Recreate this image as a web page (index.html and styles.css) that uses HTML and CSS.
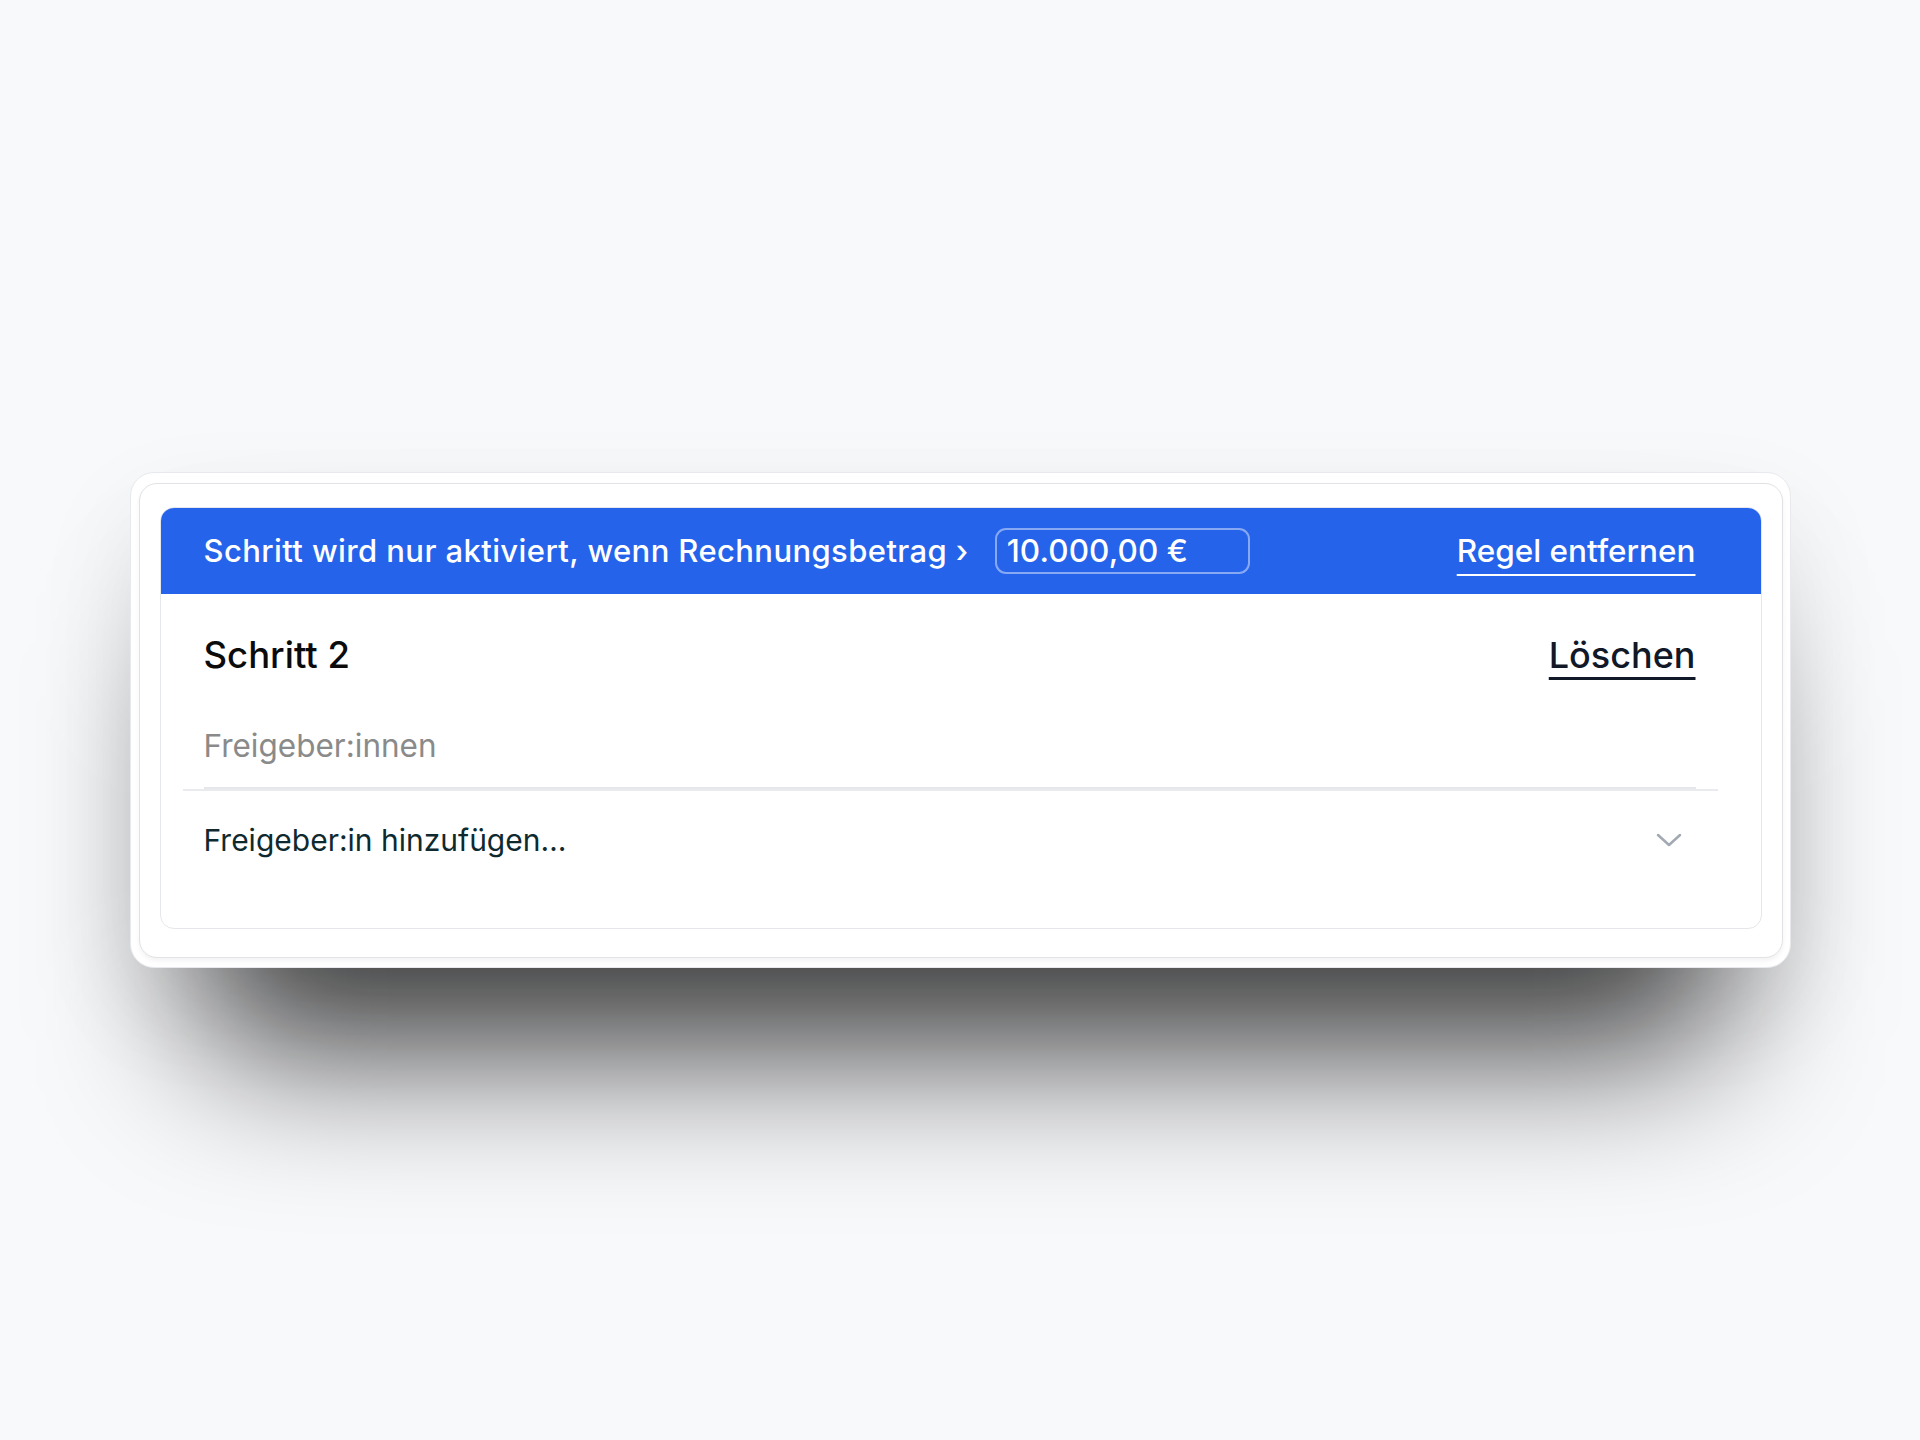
FILE: index.html
```html
<!DOCTYPE html>
<html lang="de">
<head>
<meta charset="utf-8">
<title>Schritt 2</title>
<link rel="stylesheet" href="styles.css">
</head>
<body>
<main class="stage">
  <div class="frame">
    <div class="panel">
      <section class="step">
        <header class="rule">
          <span class="rule-text">Schritt wird nur aktiviert, wenn Rechnungsbetrag ›</span>
          <div class="amount">10.000,00 €</div>
          <a class="rule-remove">Regel entfernen</a>
        </header>
        <div class="step-body">
          <div class="step-head">
            <h2 class="step-title">Schritt 2</h2>
            <a class="step-delete">Löschen</a>
          </div>
          <div class="approvers-label">Freigeber:innen</div>
          <div class="select">
            <span class="select-text">Freigeber:in hinzufügen…</span>
            <svg class="chevron" width="26" height="14" viewBox="0 0 26 14" aria-hidden="true">
              <path d="M2 2 L13 12 L24 2" fill="none" stroke="#a3a9b3" stroke-width="2.5" stroke-linecap="round" stroke-linejoin="round"/>
            </svg>
          </div>
        </div>
      </section>
    </div>
  </div>
</main>
</body>
</html>
```

FILE: styles.css
```css
* { box-sizing: border-box; }

html, body {
  margin: 0;
  padding: 0;
}

body {
  background: #f8f9fb;
  font-family: "Inter", "Noto Sans", "Liberation Sans", sans-serif;
  color: #111;
}

.stage {
  min-height: 1440px;
  display: flex;
  align-items: center;
  justify-content: center;
}

.frame {
  position: relative;
  width: 1661px;
  background: #ffffff;
  border: 1px solid #e8e9ec;
  border-radius: 24px;
  padding: 10px 7px 9px 8px;
  box-shadow: 0 40px 100px rgba(0, 0, 0, 0.08);
}

/* soft drop shadow cast below the card */
.frame::before {
  content: "";
  position: absolute;
  top: 160px;
  left: 72px;
  right: 72px;
  bottom: -84px;
  border-radius: 40px;
  background: rgba(0, 0, 0, 0.74);
  filter: blur(78px);
  z-index: -1;
}

.panel {
  background: #ffffff;
  border: 1px solid #e1e2e5;
  border-radius: 18px;
  padding: 23px 20px 28px 20px;
  box-shadow: 0 3px 5px rgba(0, 0, 0, 0.05);
}

.step {
  border: 1px solid #e5e7eb;
  border-radius: 14px;
  overflow: hidden;
  background: #ffffff;
}

.rule {
  height: 86px;
  background: #2563eb;
  color: #ffffff;
  display: flex;
  align-items: center;
  padding: 0 65px 0 43px;
}

.rule-text {
  font-size: 31px;
  font-weight: 520;
  line-height: 36px;
  letter-spacing: 0.4px;
  white-space: nowrap;
}

.amount {
  margin-left: 26px;
  width: 255px;
  height: 46px;
  border: 2px solid rgba(255, 255, 255, 0.45);
  border-radius: 11px;
  padding-left: 10px;
  display: flex;
  align-items: center;
  font-size: 31.5px;
  font-weight: 520;
  line-height: 36px;
  letter-spacing: 0.1px;
}

.rule-remove {
  margin-left: auto;
  font-size: 31.5px;
  font-weight: 520;
  line-height: 36px;
  color: #ffffff;
  text-decoration: underline;
  text-decoration-thickness: 2px;
  text-underline-offset: 12px;
}

.step-body {
  padding: 40px 0 70px 0;
}

.step-head {
  display: flex;
  justify-content: space-between;
  align-items: flex-start;
  margin: 0 65px 0 43px;
  height: 47px;
}

.step-title {
  margin: 0;
  font-size: 36.5px;
  font-weight: 500;
  line-height: 42px;
  color: #0b0b0c;
}

.step-delete {
  font-size: 36px;
  font-weight: 450;
  line-height: 42px;
  color: #111827;
  text-decoration: underline;
  text-decoration-thickness: 3px;
  text-underline-offset: 9px;
}

.approvers-label {
  margin: 47px 65px 0 43px;
  padding-bottom: 23px;
  border-bottom: 4px solid #e5e7eb;
  font-size: 31.5px;
  line-height: 36px;
  color: #8a8a8a;
}

.select {
  margin: -2px 43px 0 22px;
  border-top: 2px solid #eaebee;
  padding: 31px 36px 0 21px;
  display: flex;
  align-items: center;
  justify-content: space-between;
}

.select-text {
  font-size: 30px;
  line-height: 36px;
  color: #0f2a2f;
}

.chevron {
  display: block;
}
```
